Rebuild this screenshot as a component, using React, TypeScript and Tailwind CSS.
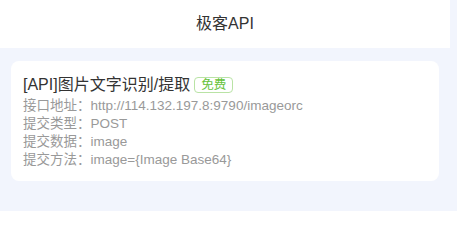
export default function App() {
  const rows = [
    { label: '接口地址：', value: 'http://114.132.197.8:9790/imageorc' },
    { label: '提交类型：', value: 'POST' },
    { label: '提交数据：', value: 'image' },
    { label: '提交方法：', value: 'image={Image Base64}' },
  ];

  return (
    <div
      className="min-h-[211px] w-full bg-[#f2f5fd]"
      style={{ fontFamily: '"Liberation Sans", "Noto Sans CJK SC", sans-serif' }}
    >
      <div className="w-[450px]">
        <div className="flex h-[48px] items-center justify-center bg-white text-[16px] text-[#333]">
          极客API
        </div>
        <div className="mx-[11px] mt-[13px] rounded-[8px] bg-white px-[12px] pt-[12px] pb-[12px]">
          <div className="flex items-center gap-[4px] text-[16px] leading-[24px] text-[#333]">
            <span>[API]图片文字识别/提取</span>
            <span className="rounded-[4px] border border-[#b9e3a5] bg-white px-[6px] text-[12.5px] leading-[14px] text-[#67c23a]">
              免费
            </span>
          </div>
          <div className="text-[13.5px] leading-[18px] text-[#999]">
            {rows.map((r) => (
              <div key={r.label}>
                {r.label}
                {r.value}
              </div>
            ))}
          </div>
        </div>
      </div>
    </div>
  );
}
